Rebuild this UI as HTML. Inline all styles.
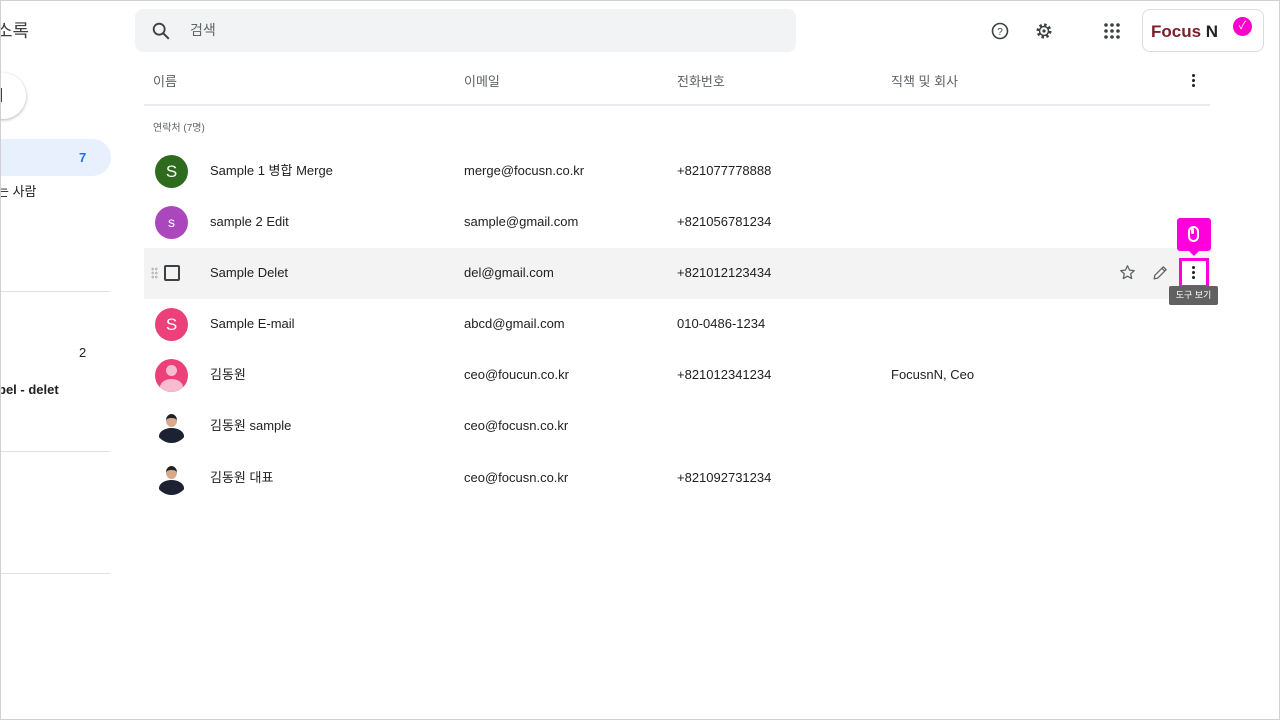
<!DOCTYPE html>
<html><head><meta charset="utf-8"><style>
*{margin:0;padding:0;box-sizing:border-box}
body{width:1280px;height:720px;overflow:hidden;background:#fff;font-family:"Liberation Sans","Noto Sans CJK KR",sans-serif;color:#202124;position:relative}
.frame{position:absolute;inset:0;border:1px solid #d0d0d0;pointer-events:none}
.a{position:absolute}
.t{font-size:13px;white-space:nowrap;line-height:16px;height:16px}
.hd{font-size:13px;color:#5f6368;line-height:16px;height:16px}
.av{position:absolute;left:155px;width:33px;height:33px;border-radius:50%;color:#fff;font-size:17px;text-align:center;line-height:33px}
.sep{position:absolute;left:0;width:110px;height:1px;background:#e0e0e0}
</style></head><body>
<div class="a" style="left:-4px;top:20px;font-size:18px;line-height:22px;color:#3c4043">소록</div>
<div class="a" style="left:-30px;top:73px;width:56px;height:46px;border-radius:23px;background:#fff;box-shadow:0 1px 3px rgba(0,0,0,.3)"></div>
<div class="a" style="left:0;top:88px;width:2px;height:14px;background:#3c4043"></div>
<div class="a" style="left:0;top:139px;width:111px;height:37px;background:#e8f0fe;border-radius:0 19px 19px 0"></div>
<div class="a t" style="left:79px;top:150px;color:#1a73e8;font-weight:bold">7</div>
<div class="a t" style="left:-3px;top:184px">는 사람</div>
<div class="sep" style="top:291px"></div>
<div class="a t" style="left:79px;top:345px">2</div>
<div class="a t" style="left:-2px;top:382px;font-weight:bold">bel - delet</div>
<div class="sep" style="top:451px"></div>
<div class="sep" style="top:573px"></div>

<div class="a" style="left:135px;top:9px;width:661px;height:43px;background:#f1f3f4;border-radius:8px"></div>
<svg class="a" style="left:150px;top:20px" width="22" height="22" viewBox="0 0 24 24"><circle cx="10" cy="10" r="6" fill="none" stroke="#3c4043" stroke-width="2"/><path d="M14.5 14.5l6 6" stroke="#3c4043" stroke-width="2.2"/></svg>
<div class="a" style="left:190px;top:22px;font-size:14px;line-height:16px;color:#5f6368">검색</div>
<svg class="a" style="left:990px;top:21px" width="20" height="20" viewBox="0 0 20 20"><circle cx="10" cy="10" r="7.5" fill="none" stroke="#3c4043" stroke-width="1.6"/><text x="10" y="14" font-size="10" text-anchor="middle" fill="#3c4043" font-family="Liberation Sans">?</text></svg>
<svg class="a" style="left:1034px;top:21px" width="20" height="20" viewBox="0 0 20 20"><circle cx="10" cy="10" r="6" fill="none" stroke="#3c4043" stroke-width="3" stroke-dasharray="2.4 2.3"/><circle cx="10" cy="10" r="4.5" fill="none" stroke="#3c4043" stroke-width="1.5"/><circle cx="10" cy="10" r="1.6" fill="#3c4043"/></svg>
<svg class="a" style="left:1104px;top:23px" width="16" height="16" viewBox="0 0 16 16" fill="#3c4043"><circle cx="2" cy="2" r="1.8"/><circle cx="8" cy="2" r="1.8"/><circle cx="14" cy="2" r="1.8"/><circle cx="2" cy="8" r="1.8"/><circle cx="8" cy="8" r="1.8"/><circle cx="14" cy="8" r="1.8"/><circle cx="2" cy="14" r="1.8"/><circle cx="8" cy="14" r="1.8"/><circle cx="14" cy="14" r="1.8"/></svg>
<div class="a" style="left:1142px;top:9px;width:122px;height:43px;border:1px solid #dadce0;border-radius:8px;background:#fff"></div>
<div class="a" style="left:1151px;top:22px;font-size:17px;line-height:20px;font-weight:bold;color:#7a1f2b">Focus <span style="color:#222">N</span></div>
<div class="a" style="left:1233px;top:17px;width:19px;height:19px;border-radius:50%;background:#ff00cc;color:#fff;font-size:11px;text-align:center;line-height:19px">✓</div>

<div class="a hd" style="left:153px;top:74px">이름</div>
<div class="a hd" style="left:464px;top:74px">이메일</div>
<div class="a hd" style="left:677px;top:74px">전화번호</div>
<div class="a hd" style="left:891px;top:74px">직책 및 회사</div>
<div class="a" style="left:1192px;top:74px;width:3px;font-size:0"><div style="width:3px;height:3px;border-radius:50%;background:#202124;margin-bottom:2px"></div><div style="width:3px;height:3px;border-radius:50%;background:#202124;margin-bottom:2px"></div><div style="width:3px;height:3px;border-radius:50%;background:#202124"></div></div>
<div class="a" style="left:144px;top:104px;width:1066px;height:2px;background:#e8eaed"></div>
<div class="a" style="left:153px;top:123px;font-size:10px;line-height:12px;color:#5f6368">연락처 (7명)</div>

<div class="a" style="left:144px;top:248px;width:1066px;height:51px;background:#f3f3f3"></div>

<div class="av" style="top:155px;background:#2e6b1f">S</div>
<div class="av" style="top:206px;background:#ab47bc;font-size:14px">s</div>
<div class="a" style="left:151px;top:267px;width:7px;height:12px;background:radial-gradient(circle,#bbb 1.2px,transparent 1.5px) 0 0/3.5px 4px"></div>
<div class="a" style="left:164px;top:265px;width:16px;height:16px;border:2px solid #3c4043;border-radius:2px"></div>
<div class="av" style="top:308px;background:#ec407a">S</div>
<div class="av" style="top:359px;background:#ec407a;overflow:hidden"><div style="position:absolute;left:11px;top:6px;width:11px;height:11px;border-radius:50%;background:#f8bbd0"></div><div style="position:absolute;left:5px;top:20px;width:23px;height:16px;border-radius:50%;background:#f8bbd0"></div></div>
<div class="av" style="top:410px;background:#fff;overflow:hidden"><div style="position:absolute;left:11px;top:4px;width:11px;height:13px;border-radius:50%;background:#d9a98c;border-top:4px solid #222"></div><div style="position:absolute;left:4px;top:18px;width:25px;height:16px;border-radius:50% 50% 0 0;background:#1d2233"></div></div>
<div class="av" style="top:462px;background:#fff;overflow:hidden"><div style="position:absolute;left:11px;top:4px;width:11px;height:13px;border-radius:50%;background:#d9a98c;border-top:4px solid #222"></div><div style="position:absolute;left:4px;top:18px;width:25px;height:16px;border-radius:50% 50% 0 0;background:#1d2233"></div></div>

<div class="a t" style="left:210px;top:163px">Sample 1 병합 Merge</div>
<div class="a t" style="left:464px;top:163px">merge@focusn.co.kr</div>
<div class="a t" style="left:677px;top:163px">+821077778888</div>
<div class="a t" style="left:210px;top:214px">sample 2 Edit</div>
<div class="a t" style="left:464px;top:214px">sample@gmail.com</div>
<div class="a t" style="left:677px;top:214px">+821056781234</div>
<div class="a t" style="left:210px;top:265px">Sample Delet</div>
<div class="a t" style="left:464px;top:265px">del@gmail.com</div>
<div class="a t" style="left:677px;top:265px">+821012123434</div>
<div class="a t" style="left:210px;top:316px">Sample E-mail</div>
<div class="a t" style="left:464px;top:316px">abcd@gmail.com</div>
<div class="a t" style="left:677px;top:316px">010-0486-1234</div>
<div class="a t" style="left:210px;top:367px">김동원</div>
<div class="a t" style="left:464px;top:367px">ceo@foucun.co.kr</div>
<div class="a t" style="left:677px;top:367px">+821012341234</div>
<div class="a t" style="left:891px;top:367px">FocusnN, Ceo</div>
<div class="a t" style="left:210px;top:418px">김동원 sample</div>
<div class="a t" style="left:464px;top:418px">ceo@focusn.co.kr</div>
<div class="a t" style="left:210px;top:470px">김동원 대표</div>
<div class="a t" style="left:464px;top:470px">ceo@focusn.co.kr</div>
<div class="a t" style="left:677px;top:470px">+821092731234</div>

<svg class="a" style="left:1119px;top:264px" width="17" height="17" viewBox="0 0 24 24"><path d="M12 2.5l2.9 6.2 6.6.7-5 4.5 1.4 6.6L12 17.2l-5.9 3.3 1.4-6.6-5-4.5 6.6-.7z" fill="none" stroke="#5f6368" stroke-width="1.8" stroke-linejoin="round"/></svg>
<svg class="a" style="left:1152px;top:264px" width="17" height="17" viewBox="0 0 24 24"><path d="M3 21l1-5L16 4l4 4L8 20z M14 6l4 4" fill="none" stroke="#5f6368" stroke-width="1.8" stroke-linejoin="round"/></svg>
<div class="a" style="left:1179px;top:258px;width:30px;height:30px;background:#ff00dd"></div>
<div class="a" style="left:1182px;top:261px;width:24px;height:24px;background:#fff"></div>
<div class="a" style="left:1192px;top:266px;width:3px;font-size:0"><div style="width:3px;height:3px;border-radius:50%;background:#202124;margin-bottom:2px"></div><div style="width:3px;height:3px;border-radius:50%;background:#202124;margin-bottom:2px"></div><div style="width:3px;height:3px;border-radius:50%;background:#202124"></div></div>
<div class="a" style="left:1177px;top:218px;width:34px;height:33px;background:#ff00dd;border-radius:3px"></div>
<div class="a" style="left:1189px;top:251px;width:0;height:0;border-left:5px solid transparent;border-right:5px solid transparent;border-top:5px solid #ff00dd"></div>
<div class="a" style="left:1188px;top:226px;width:11px;height:16px;border:2px solid #fff;border-radius:6px"></div>
<div class="a" style="left:1191px;top:228px;width:3px;height:6px;background:#fff;border-radius:2px"></div>
<div class="a" style="left:1169px;top:286px;width:49px;height:19px;background:#616161;border-radius:2px;color:#fff;font-size:9px;text-align:center;line-height:19px">도구 보기</div>
<div class="frame"></div>
</body></html>
